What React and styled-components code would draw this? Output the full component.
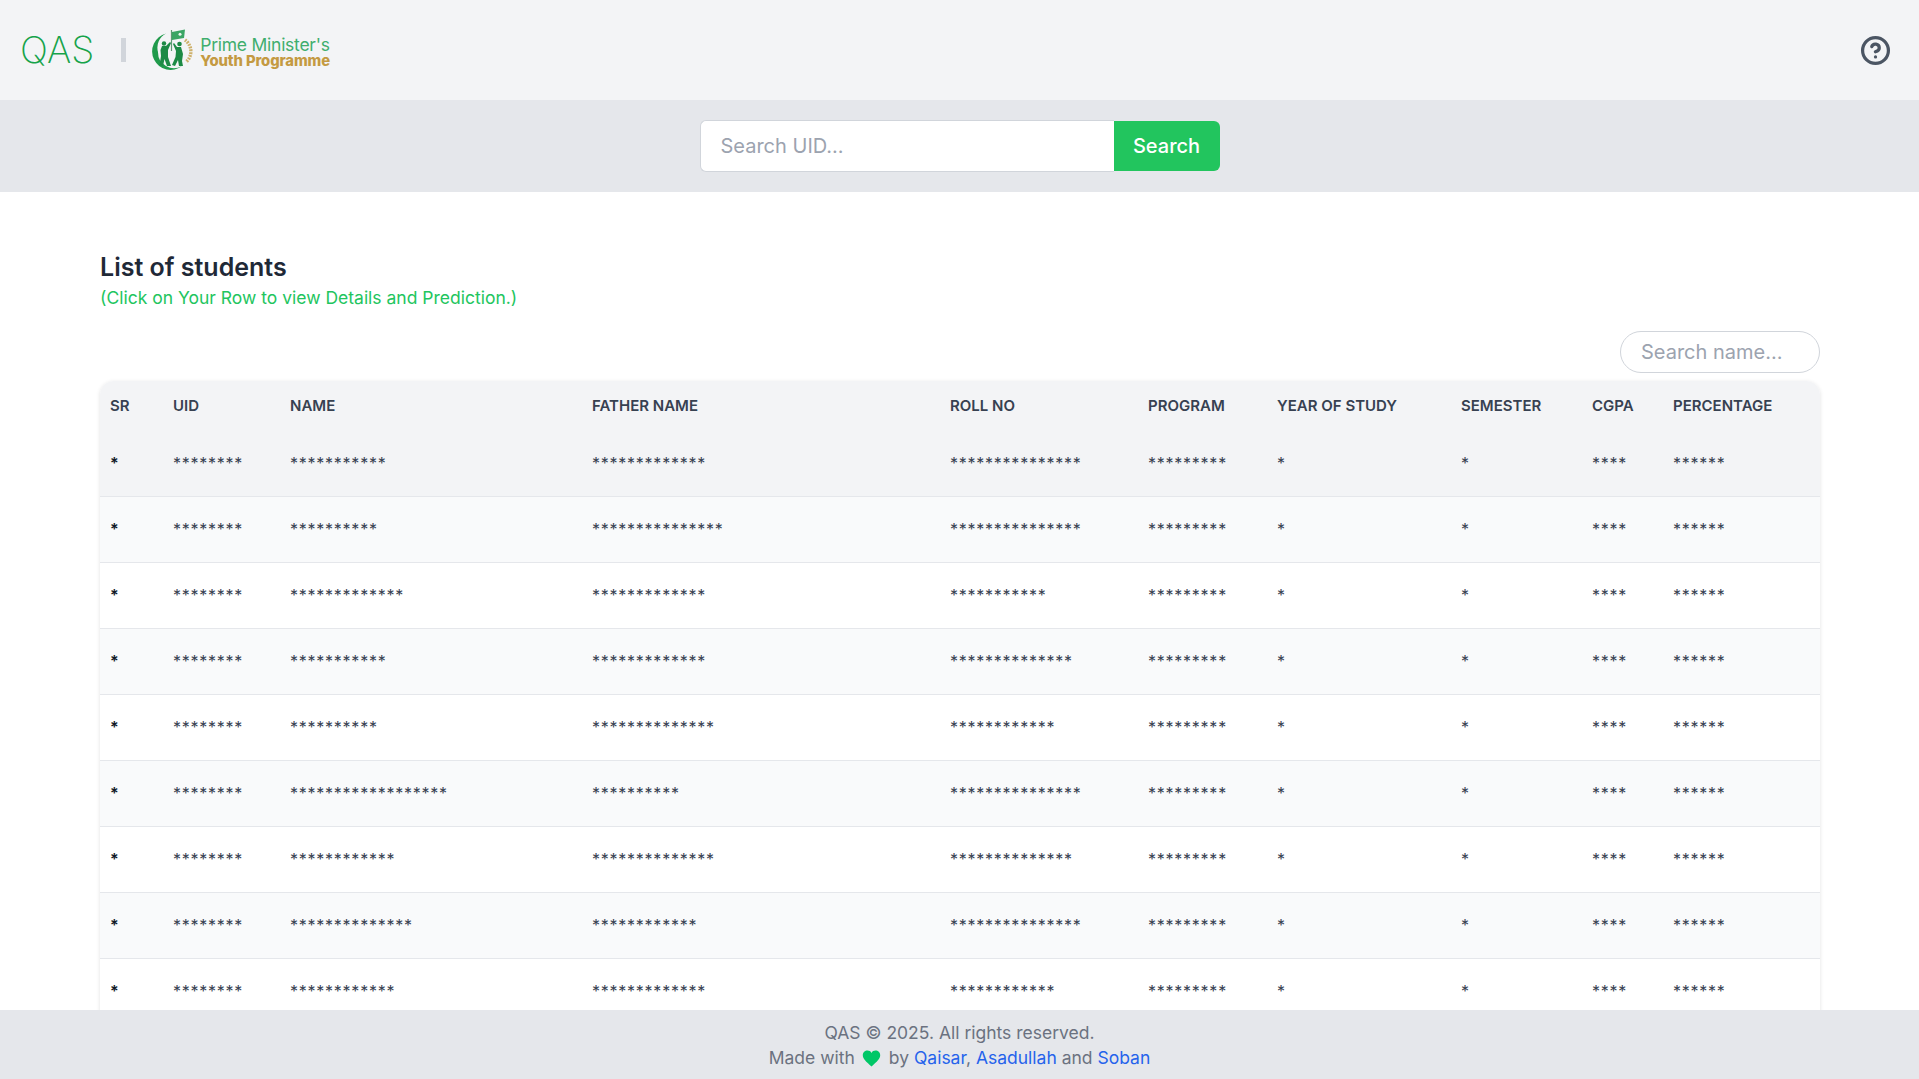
import React from "react";
import styled, { createGlobalStyle } from "styled-components";
import { CircleHelp } from "lucide-react";

const GlobalStyle = createGlobalStyle`
  * { box-sizing: border-box; }
  html, body { margin: 0; padding: 0; height: 100%; background: #fff; }
  body { font-family: Inter, "Liberation Sans", sans-serif; color: #1f2937; }
`;

const Page = styled.div`
  display: flex;
  flex-direction: column;
  height: 100vh;
  overflow: hidden;
`;

const Header = styled.header`
  flex: 0 0 100px;
  display: flex;
  align-items: center;
  justify-content: space-between;
  padding: 0 28px 0 20px;
  background: #f3f4f6;
`;

const Brand = styled.div`
  display: flex;
  align-items: center;
`;

const Wordmark = styled.span`
  font-size: 37px;
  font-weight: 200;
  color: #16a34a;
  line-height: 40px;
`;

const Divider = styled.span`
  width: 5px;
  height: 24px;
  margin: 0 26px 0 27px;
  background: #d1d5db;
`;

const LogoText = styled.div`
  display: flex;
  flex-direction: column;
  margin: 5px 0 0 6px;
  font-family: Inter, sans-serif;
`;

const LogoTop = styled.span`
  font-size: 17.5px;
  line-height: 18px;
  color: #3fae6d;
  letter-spacing: -0.25px;
`;

const LogoBottom = styled.span`
  font-size: 14.8px;
  line-height: 15px;
  font-weight: 800;
  color: #c49a42;
  letter-spacing: -0.1px;
`;

const HelpButton = styled.button`
  display: flex;
  padding: 0;
  border: none;
  background: none;
  color: #4b5563;
`;

const SearchBar = styled.div`
  flex: 0 0 92px;
  display: flex;
  align-items: center;
  justify-content: center;
  background: #e5e7eb;
`;

const SearchForm = styled.form`
  display: flex;
  align-items: center;
  width: 520px;
  height: 52px;
`;

const UidInput = styled.input`
  flex: 1;
  align-self: stretch;
  min-width: 0;
  padding: 0 20px;
  font: 400 20px Inter, sans-serif;
  color: #1f2937;
  background: #fff;
  border: 1px solid #d1d5db;
  border-right: none;
  border-radius: 6px 0 0 6px;
  outline: none;
  &::placeholder { color: #9ca3af; }
`;

const SearchButton = styled.button`
  width: 106px;
  height: 50px;
  border: none;
  border-radius: 0 6px 6px 0;
  font: 500 20px Inter, sans-serif;
  color: #fff;
  background: #22c55e;
`;

const Main = styled.main`
  flex: 1;
  min-height: 0;
  overflow: hidden;
  padding: 59px 99px 0 100px;
`;

const Title = styled.h2`
  margin: 0 0 1px;
  font-size: 25px;
  line-height: 32px;
  font-weight: 600;
  color: #1f2937;
`;

const Subtitle = styled.p`
  margin: 0;
  font-size: 17.5px;
  line-height: 28px;
  color: #22c55e;
`;

const FilterRow = styled.div`
  display: flex;
  justify-content: flex-end;
  margin: 19px 0 8px;
`;

const NameInput = styled.input`
  width: 200px;
  height: 42px;
  padding: 0 20px;
  font: 400 20px Inter, sans-serif;
  background: #fff;
  border: 1px solid #d1d5db;
  border-radius: 21px;
  outline: none;
  &::placeholder { color: #9ca3af; }
`;

const Card = styled.div`
  border-radius: 14px 14px 0 0;
  box-shadow: 0 1px 4px rgba(0, 0, 0, 0.12);
  overflow: hidden;
`;

const Table = styled.table`
  width: 100%;
  table-layout: fixed;
  border-collapse: collapse;
  font-size: 15px;
`;

const Col = styled.col`
  width: ${(p) => p.$width}px;
`;

const HeadRow = styled.tr`
  height: 49px;
  background: #f3f4f6;
`;

const Th = styled.th`
  padding: 0 10px;
  text-align: left;
  font-weight: 600;
  color: #374151;
`;

const Row = styled.tr`
  height: 66px;
  border-bottom: 1px solid #e5e7eb;
  background: #fff;
  &:nth-child(even) { background: #f9fafb; }
  &:first-child { background: #f3f4f6; }
`;

const Td = styled.td`
  padding: 0 10px;
  white-space: nowrap;
  font-size: 16px;
  letter-spacing: 0.75px;
  color: ${(p) => (p.$strong ? "#111827" : "#374151")};
  font-weight: ${(p) => (p.$strong ? 600 : 400)};
`;

const Footer = styled.footer`
  flex: 0 0 69px;
  display: flex;
  flex-direction: column;
  align-items: center;
  justify-content: center;
  background: #e5e7eb;
  font-size: 17.5px;
  line-height: 25px;
  color: #6b7280;
`;

const Link = styled.a`
  color: #2563eb;
  text-decoration: none;
`;

const HeartIcon = styled.svg`
  width: 19px;
  height: 19px;
  margin: 0 8px 0 7px;
  vertical-align: -4px;
`;

const columns = [
  ["SR", 63],
  ["UID", 117],
  ["NAME", 302],
  ["FATHER NAME", 358],
  ["ROLL NO", 198],
  ["PROGRAM", 129],
  ["YEAR OF STUDY", 184],
  ["SEMESTER", 131],
  ["CGPA", 81],
  ["PERCENTAGE", 157],
];

// name, father and roll no lengths, everything else is the same per row
const students = [
  [11, 13, 15],
  [10, 15, 15],
  [13, 13, 11],
  [11, 13, 14],
  [10, 14, 12],
  [18, 10, 15],
  [12, 14, 14],
  [14, 12, 15],
  [12, 13, 12],
];

const mask = (n) => "*".repeat(n);

function PmypLogo() {
  return (
    <svg width="42" height="42" viewBox="0 0 42 42">
      <path d="M14 4.5 A18.5 18.5 0 1 0 30 37 A16 16 0 0 1 6 23 A16 16 0 0 1 14 4.5Z" fill="#1f9a4b" />
      <path d="M19.5 1 L19.5 22" stroke="#5d9a72" strokeWidth="1.2" />
      <path d="M20 3 L33 0.5 L32 9 L20 11Z" fill="#3aa564" />
      <circle cx="28" cy="5.2" r="1.5" fill="#eaf5ee" />
      <path d="M10 17 L14 17 L18 13 L19 14 L16 21 L16 28 L19 37 L15 37 L12.5 30 L11 37 L7.5 36 L9 27 L8.5 21Z" fill="#1c8a45" />
      <circle cx="12" cy="14.5" r="2.2" fill="#1c8a45" />
      <path d="M25 18 L29 18 L31 25 L30 32 L31 37 L27 37 L26 31 L23 37 L20 36 L23.5 28 L24 22 L21 15 L22 14Z" fill="#1c8a45" />
      <circle cx="27.5" cy="15" r="2.3" fill="#1c8a45" />
      <path d="M33 11 A14 14 0 0 1 34 33" fill="none" stroke="#cdb06a" strokeWidth="3.4" strokeDasharray="1.8 1" />
    </svg>
  );
}

export default function App() {
  return (
    <Page>
      <GlobalStyle />
      <Header>
        <Brand>
          <Wordmark>QAS</Wordmark>
          <Divider />
          <PmypLogo />
          <LogoText>
            <LogoTop>Prime Minister's</LogoTop>
            <LogoBottom>Youth Programme</LogoBottom>
          </LogoText>
        </Brand>
        <HelpButton aria-label="Help">
          <CircleHelp size={31} strokeWidth={2.5} />
        </HelpButton>
      </Header>
      <SearchBar>
        <SearchForm>
          <UidInput placeholder="Search UID..." />
          <SearchButton type="button">Search</SearchButton>
        </SearchForm>
      </SearchBar>
      <Main>
        <Title>List of students</Title>
        <Subtitle>(Click on Your Row to view Details and Prediction.)</Subtitle>
        <FilterRow>
          <NameInput placeholder="Search name..." />
        </FilterRow>
        <Card>
          <Table>
            <colgroup>
              {columns.map(([label, width]) => (
                <Col key={label} $width={width} />
              ))}
            </colgroup>
            <thead>
              <HeadRow>
                {columns.map(([label]) => (
                  <Th key={label}>{label}</Th>
                ))}
              </HeadRow>
            </thead>
            <tbody>
              {students.map(([name, father, roll], i) => (
                <Row key={i}>
                  <Td $strong>{mask(1)}</Td>
                  <Td>{mask(8)}</Td>
                  <Td>{mask(name)}</Td>
                  <Td>{mask(father)}</Td>
                  <Td>{mask(roll)}</Td>
                  <Td>{mask(9)}</Td>
                  <Td>{mask(1)}</Td>
                  <Td>{mask(1)}</Td>
                  <Td>{mask(4)}</Td>
                  <Td>{mask(6)}</Td>
                </Row>
              ))}
            </tbody>
          </Table>
        </Card>
      </Main>
      <Footer>
        <div>QAS © 2025. All rights reserved.</div>
        <div>
          Made with
          <HeartIcon viewBox="0 0 24 24">
            <path
              d="M12 22 C5 16 1 12.5 1 8 C1 4.5 3.7 2 7 2 C9 2 11 3 12 5 C13 3 15 2 17 2 C20.3 2 23 4.5 23 8 C23 12.5 19 16 12 22Z"
              fill="#00c767"
            />
          </HeartIcon>
          by <Link href="#">Qaisar</Link>, <Link href="#">Asadullah</Link> and <Link href="#">Soban</Link>
        </div>
      </Footer>
    </Page>
  );
}
